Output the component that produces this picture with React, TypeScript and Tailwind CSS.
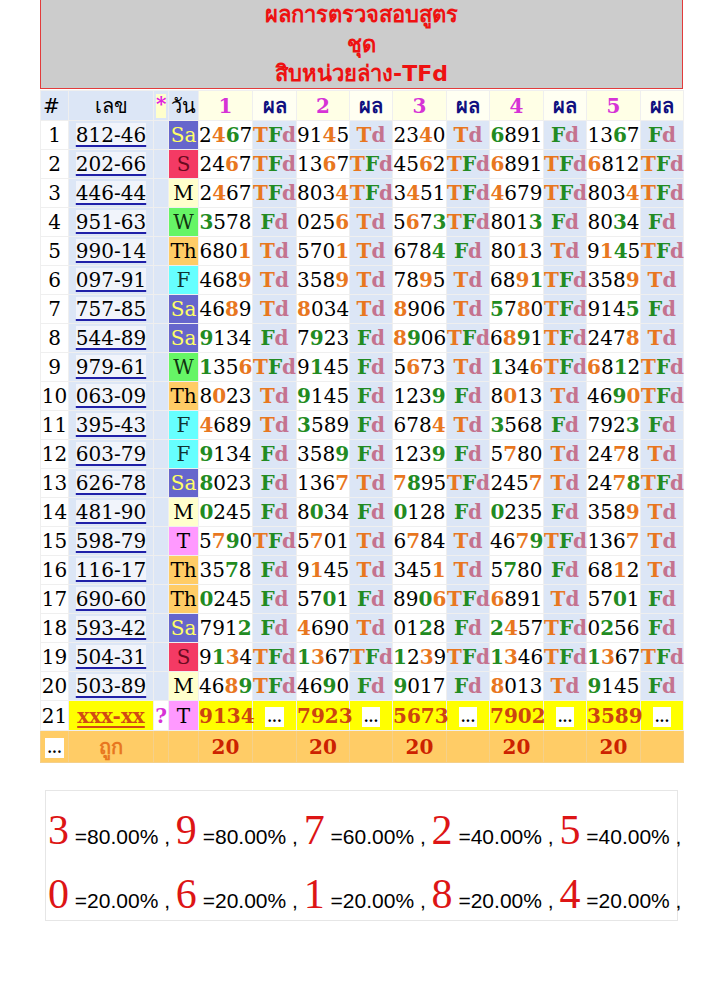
const digitColor: Record<string, string> = {
  o: 'text-[#e8771f] font-bold',
  g: 'text-[#228b22] font-bold',
  k: 'text-black',
}

const resultColor: Record<string, string> = {
  T: 'text-[#e8771f]',
  F: 'text-[#228b22]',
  d: 'text-[#c4738f]',
}

const dayStyle: Record<string, string> = {
  Sa: 'bg-[#6666cc] text-[#ffff66]',
  S: 'bg-[#f43a64] text-[#6b0a1f]',
  M: 'bg-[#ffffcc] text-black',
  W: 'bg-[#66f566] text-[#113311]',
  Th: 'bg-[#ffcc66] text-black',
  F: 'bg-[#66ffff] text-[#113333]',
  T: 'bg-[#ff99ff] text-black',
}

type Cell = [string, string, string]
type Row = { num: string; day: string; cells: Cell[] }

const rows: Row[] = [
  { num: '812-46', day: 'Sa', cells: [['2467', 'kogk', 'TFd'], ['9145', 'kkok', 'Td'], ['2340', 'kkok', 'Td'], ['6891', 'gkkk', 'Fd'], ['1367', 'kkgk', 'Fd']] },
  { num: '202-66', day: 'S', cells: [['2467', 'kkok', 'TFd'], ['1367', 'kkok', 'TFd'], ['4562', 'kkok', 'TFd'], ['6891', 'okkk', 'TFd'], ['6812', 'okkk', 'TFd']] },
  { num: '446-44', day: 'M', cells: [['2467', 'kokk', 'TFd'], ['8034', 'kkko', 'TFd'], ['3451', 'kokk', 'TFd'], ['4679', 'okkk', 'TFd'], ['8034', 'kkko', 'TFd']] },
  { num: '951-63', day: 'W', cells: [['3578', 'gkkk', 'Fd'], ['0256', 'kkko', 'Td'], ['5673', 'kokg', 'TFd'], ['8013', 'kkkg', 'Fd'], ['8034', 'kkgk', 'Fd']] },
  { num: '990-14', day: 'Th', cells: [['6801', 'kkko', 'Td'], ['5701', 'kkko', 'Td'], ['6784', 'kkkg', 'Fd'], ['8013', 'kkok', 'Td'], ['9145', 'kogk', 'TFd']] },
  { num: '097-91', day: 'F', cells: [['4689', 'kkko', 'Td'], ['3589', 'kkko', 'Td'], ['7895', 'kkok', 'Td'], ['6891', 'kkog', 'TFd'], ['3589', 'kkko', 'Td']] },
  { num: '757-85', day: 'Sa', cells: [['4689', 'kkok', 'Td'], ['8034', 'okkk', 'Td'], ['8906', 'okkk', 'Td'], ['5780', 'gkok', 'TFd'], ['9145', 'kkkg', 'Fd']] },
  { num: '544-89', day: 'Sa', cells: [['9134', 'gkkk', 'Fd'], ['7923', 'kgkk', 'Fd'], ['8906', 'ogkk', 'TFd'], ['6891', 'kogk', 'TFd'], ['2478', 'kkko', 'Td']] },
  { num: '979-61', day: 'W', cells: [['1356', 'gkko', 'TFd'], ['9145', 'kgkk', 'Fd'], ['5673', 'kokk', 'Td'], ['1346', 'gkko', 'TFd'], ['6812', 'okgk', 'TFd']] },
  { num: '063-09', day: 'Th', cells: [['8023', 'kokk', 'Td'], ['9145', 'gkkk', 'Fd'], ['1239', 'kkkg', 'Fd'], ['8013', 'kokk', 'Td'], ['4690', 'kkgo', 'TFd']] },
  { num: '395-43', day: 'F', cells: [['4689', 'okkk', 'Td'], ['3589', 'gkkk', 'Fd'], ['6784', 'kkko', 'Td'], ['3568', 'gkkk', 'Fd'], ['7923', 'kkkg', 'Fd']] },
  { num: '603-79', day: 'F', cells: [['9134', 'gkkk', 'Fd'], ['3589', 'kkkg', 'Fd'], ['1239', 'kkkg', 'Fd'], ['5780', 'kokk', 'Td'], ['2478', 'kkok', 'Td']] },
  { num: '626-78', day: 'Sa', cells: [['8023', 'gkkk', 'Fd'], ['1367', 'kkko', 'Td'], ['7895', 'ogkk', 'TFd'], ['2457', 'kkko', 'Td'], ['2478', 'kkog', 'TFd']] },
  { num: '481-90', day: 'M', cells: [['0245', 'gkkk', 'Fd'], ['8034', 'kgkk', 'Fd'], ['0128', 'gkkk', 'Fd'], ['0235', 'gkkk', 'Fd'], ['3589', 'kkko', 'Td']] },
  { num: '598-79', day: 'T', cells: [['5790', 'kogk', 'TFd'], ['5701', 'kokk', 'Td'], ['6784', 'kokk', 'Td'], ['4679', 'kkog', 'TFd'], ['1367', 'kkko', 'Td']] },
  { num: '116-17', day: 'Th', cells: [['3578', 'kkgk', 'Fd'], ['9145', 'kokk', 'Td'], ['3451', 'kkko', 'Td'], ['5780', 'kgkk', 'Fd'], ['6812', 'kkok', 'Td']] },
  { num: '690-60', day: 'Th', cells: [['0245', 'gkkk', 'Fd'], ['5701', 'kkgk', 'Fd'], ['8906', 'kkgo', 'TFd'], ['6891', 'okkk', 'Td'], ['5701', 'kkgk', 'Fd']] },
  { num: '593-42', day: 'Sa', cells: [['7912', 'kkkg', 'Fd'], ['4690', 'okkk', 'Td'], ['0128', 'kkgk', 'Fd'], ['2457', 'gokk', 'TFd'], ['0256', 'kgkk', 'Fd']] },
  { num: '504-31', day: 'S', cells: [['9134', 'kgok', 'TFd'], ['1367', 'gokk', 'TFd'], ['1239', 'gkok', 'TFd'], ['1346', 'gokk', 'TFd'], ['1367', 'gokk', 'TFd']] },
  { num: '503-89', day: 'M', cells: [['4689', 'kkog', 'TFd'], ['4690', 'kkgk', 'Fd'], ['9017', 'gkkk', 'Fd'], ['8013', 'okkk', 'Td'], ['9145', 'gkkk', 'Fd']] },
]

const predicted = ['9134', '7923', '5673', '7902', '3589']

const stats = [
  [['3', '80.00'], ['9', '80.00'], ['7', '60.00'], ['2', '40.00'], ['5', '40.00']],
  [['0', '20.00'], ['6', '20.00'], ['1', '20.00'], ['8', '20.00'], ['4', '20.00']],
]

const td = 'p-0 text-center align-middle border border-[#efefef]'
const blue = 'bg-[#dce6f6]'

function Dots() {
  return (
    <span className="inline-block bg-white text-black text-[14px] leading-[20px] px-[2px] font-bold align-middle">...</span>
  )
}

export default function App() {
  return (
    <div className="w-[720px] min-h-[992px] bg-white font-['DejaVu_Serif',serif] text-[20px]">
      {/* title */}
      <div className="ml-[40px] w-[643px] h-[89px] bg-[#cccccc] border border-t-0 border-[#e23b3b] text-center text-[#ee1111] font-bold text-[22px] leading-[29.5px] font-['DejaVu_Sans','Noto_Sans',sans-serif]">
        <div>ผลการตรวจสอบสูตร</div>
        <div>ชุด</div>
        <div>สิบหน่วยล่าง-TFd</div>
      </div>

      <table className="ml-[40px] mt-px w-[643px] table-fixed border-collapse leading-[24px]">
        <colgroup>
          <col className="w-[28px]" />
          <col className="w-[85px]" />
          <col className="w-[15px]" />
          <col className="w-[30px]" />
          <col className="w-[54px]" />
          <col className="w-[44px]" />
          <col className="w-[53px]" />
          <col className="w-[43px]" />
          <col className="w-[54px]" />
          <col className="w-[43px]" />
          <col className="w-[54px]" />
          <col className="w-[43px]" />
          <col className="w-[54px]" />
          <col className="w-[43px]" />
        </colgroup>
        <thead>
          <tr className="h-[30px]">
            <th className={`${td} ${blue} text-left pl-[2px] font-normal`}>#</th>
            <th className={`${td} ${blue} font-normal font-['DejaVu_Sans',sans-serif]`}>เลข</th>
            <th className={`${td} ${blue} font-normal`}>
              <span className="inline-block w-[10px] h-[24px] bg-[#ffffcc] text-[#e020e0] font-bold leading-[20px] align-middle">*</span>
            </th>
            <th className={`${td} ${blue} font-normal font-['DejaVu_Sans',sans-serif]`}>วัน</th>
            {[1, 2, 3, 4, 5].map((n) => (
              <>
                <th key={`h${n}`} className={`${td} bg-[#ffffe6] text-[#d633d6] font-bold`}>{n}</th>
                <th key={`r${n}`} className={`${td} bg-[#fffff2] text-[#101080] font-bold font-['DejaVu_Sans',sans-serif]`}>ผล</th>
              </>
            ))}
          </tr>
        </thead>
        <tbody>
          {rows.map((row, i) => (
            <tr key={row.num} className="h-[29px]">
              <td className={`${td} bg-white`}>{i + 1}</td>
              <td className={`${td} ${blue}`}>
                <span className="bg-[#f1f4fb] underline decoration-[#2020a8] decoration-2 underline-offset-[3px]">
                  {row.num}
                </span>
              </td>
              <td className={`${td} ${blue}`}></td>
              <td className={`${td} ${dayStyle[row.day]}`}>{row.day}</td>
              {row.cells.map(([digits, colors, result], j) => (
                <>
                  <td key={`d${j}`} className={`${td} bg-white whitespace-nowrap`}>
                    {digits.split('').map((ch, k) => (
                      <span key={k} className={digitColor[colors[k]]}>{ch}</span>
                    ))}
                  </td>
                  <td key={`r${j}`} className={`${td} ${blue} font-bold whitespace-nowrap`}>
                    {result.split('').map((ch, k) => (
                      <span key={k} className={resultColor[ch]}>{ch}</span>
                    ))}
                  </td>
                </>
              ))}
            </tr>
          ))}

          <tr className="h-[30px]">
            <td className={`${td} bg-white`}>21</td>
            <td className={`${td} bg-[#ffff00]`}>
              <span className="text-[#d24a14] font-bold underline decoration-[#d24a14] decoration-2 underline-offset-[3px]">xxx-xx</span>
            </td>
            <td className={`${td} bg-white text-[#d633d6] font-bold`}>?</td>
            <td className={`${td} ${dayStyle.T}`}>T</td>
            {predicted.map((p) => (
              <>
                <td key={`p${p}`} className={`${td} bg-[#ffff00] text-[#cc4411] font-bold`}>{p}</td>
                <td key={`q${p}`} className={`${td} bg-[#ffff00]`}>
                  <Dots />
                </td>
              </>
            ))}
          </tr>

          <tr className="h-[32px] bg-[#ffcc66]">
            <td className={`${td} border-[#f5d08a]`}>
              <Dots />
            </td>
            <td className={`${td} border-[#f5d08a] text-[#e8771f] font-bold font-['DejaVu_Sans',sans-serif]`}>ถูก</td>
            <td className={`${td} border-[#f5d08a]`}></td>
            <td className={`${td} border-[#f5d08a]`}></td>
            {[1, 2, 3, 4, 5].map((n) => (
              <>
                <td key={`c${n}`} className={`${td} border-[#f5d08a] text-[#cc2200] font-bold`}>20</td>
                <td key={`e${n}`} className={`${td} border-[#f5d08a]`}></td>
              </>
            ))}
          </tr>
        </tbody>
      </table>

      {/* digit frequency */}
      <div className="ml-[45px] mt-[27px] w-[633px] h-[131px] border border-[#e6e6e6] pt-[14px] pl-[2px]">
        {stats.map((line, li) => (
          <div key={li} className="h-[64px] leading-[64px] whitespace-nowrap">
            {line.map(([d, pct], k) => (
              <span key={d}>
                <span className="text-[42px] leading-none text-[#dd1515] font-['Liberation_Serif',serif]">{d}</span>
                <span className="text-[21px] leading-none text-black font-['Liberation_Sans',sans-serif]">
                  {' '}={pct}% ,{k < line.length - 1 ? ' ' : ''}
                </span>
              </span>
            ))}
          </div>
        ))}
      </div>
    </div>
  )
}
